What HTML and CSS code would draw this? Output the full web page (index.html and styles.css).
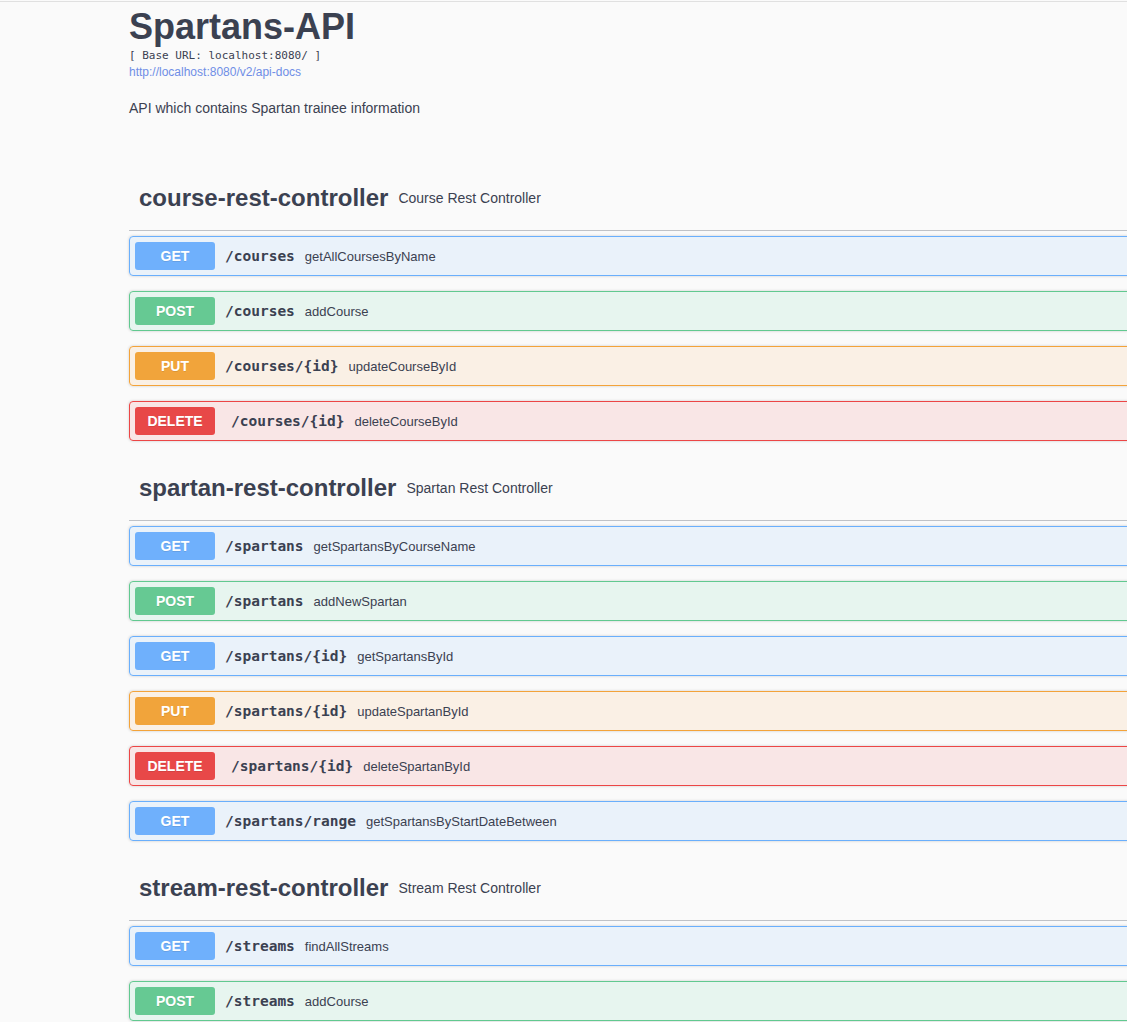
FILE: index.html
```html
<!DOCTYPE html>
<html lang="en">
<head>
<meta charset="utf-8">
<title>Spartans-API</title>
<link rel="stylesheet" href="styles.css">
</head>
<body>
<div class="page">
  <div class="wrapper">
    <section class="info">
      <h2 class="title">Spartans-API</h2>
      <pre class="base-url">[ Base URL: localhost:8080/ ]</pre>
      <a class="docs-link" href="#">http://localhost:8080/v2/api-docs</a>
      <p class="description">API which contains Spartan trainee information</p>
    </section>

    <section class="tag-section">
      <h3 class="tag"><span class="tag-name">course-rest-controller</span><small class="tag-desc">Course Rest Controller</small></h3>
      <div class="op op-get"><span class="method">GET</span><span class="path">/courses</span><span class="summary">getAllCoursesByName</span></div>
      <div class="op op-post"><span class="method">POST</span><span class="path">/courses</span><span class="summary">addCourse</span></div>
      <div class="op op-put"><span class="method">PUT</span><span class="path">/courses/{id}</span><span class="summary">updateCourseById</span></div>
      <div class="op op-delete"><span class="method">DELETE</span><span class="path">/courses/{id}</span><span class="summary">deleteCourseById</span></div>
    </section>

    <section class="tag-section">
      <h3 class="tag"><span class="tag-name">spartan-rest-controller</span><small class="tag-desc">Spartan Rest Controller</small></h3>
      <div class="op op-get"><span class="method">GET</span><span class="path">/spartans</span><span class="summary">getSpartansByCourseName</span></div>
      <div class="op op-post"><span class="method">POST</span><span class="path">/spartans</span><span class="summary">addNewSpartan</span></div>
      <div class="op op-get"><span class="method">GET</span><span class="path">/spartans/{id}</span><span class="summary">getSpartansById</span></div>
      <div class="op op-put"><span class="method">PUT</span><span class="path">/spartans/{id}</span><span class="summary">updateSpartanById</span></div>
      <div class="op op-delete"><span class="method">DELETE</span><span class="path">/spartans/{id}</span><span class="summary">deleteSpartanById</span></div>
      <div class="op op-get"><span class="method">GET</span><span class="path">/spartans/range</span><span class="summary">getSpartansByStartDateBetween</span></div>
    </section>

    <section class="tag-section">
      <h3 class="tag"><span class="tag-name">stream-rest-controller</span><small class="tag-desc">Stream Rest Controller</small></h3>
      <div class="op op-get"><span class="method">GET</span><span class="path">/streams</span><span class="summary">findAllStreams</span></div>
      <div class="op op-post"><span class="method">POST</span><span class="path">/streams</span><span class="summary">addCourse</span></div>
    </section>
  </div>
</div>
</body>
</html>
```

FILE: styles.css
```css
html, body {
  margin: 0;
  padding: 0;
  overflow: hidden;
  background: #fafafa;
}

body {
  font-family: "Liberation Sans", Arial, sans-serif;
  color: #3b4151;
  padding-top: 1px;
}

.page {
  border-top: 1px solid #e0e0e0;
}

.wrapper {
  width: 1400px;
  padding-left: 129px;
}

.info {
  padding-top: 4px;
  margin-bottom: 50px;
}

.title {
  margin: 0;
  font-size: 36px;
  line-height: 41px;
  font-weight: 700;
  color: #3b4151;
}

.base-url {
  margin: 2px 0 0;
  font-family: "DejaVu Sans Mono", "Liberation Mono", monospace;
  font-size: 11px;
  line-height: 14px;
  color: #3b4151;
}

.docs-link {
  display: block;
  margin-top: 1px;
  font-size: 12px;
  line-height: 16px;
  color: #6f8ee6;
  text-decoration: none;
}

.description {
  margin: 20px 0 0;
  font-size: 14px;
  line-height: 16px;
}

.tag {
  display: flex;
  align-items: center;
  height: 44px;
  margin: 0 0 5px;
  padding: 10px 20px 10px 10px;
  border-bottom: 1px solid rgba(59, 65, 81, 0.3);
  font-weight: 400;
}

.tag-name {
  font-size: 24px;
  font-weight: 700;
  color: #3b4151;
}

.tag-desc {
  margin-left: 10px;
  font-size: 14px;
  color: #3b4151;
}

.op {
  display: flex;
  align-items: center;
  margin: 0 0 15px;
  padding: 5px;
  border: 1px solid;
  border-radius: 4px;
  box-shadow: 0 0 3px rgba(0, 0, 0, 0.19);
}

.method {
  width: 80px;
  height: 28px;
  line-height: 28px;
  border-radius: 3px;
  text-align: center;
  font-size: 14px;
  font-weight: 700;
  color: #fff;
  text-shadow: 0 1px 0 rgba(0, 0, 0, 0.1);
}

.path {
  padding: 0 10px;
  font-family: "DejaVu Sans Mono", "Liberation Mono", monospace;
  font-size: 14.5px;
  font-weight: 700;
  color: #3b4151;
}

.summary {
  font-size: 13px;
  color: #3b4151;
}

.op-get { background: rgba(97, 175, 254, 0.1); border-color: #6aaffc; }
.op-get .method { background: #6fb0fc; }

.op-post { background: rgba(73, 204, 144, 0.1); border-color: #62c990; }
.op-post .method { background: #66c993; }

.op-put { background: rgba(252, 161, 48, 0.1); border-color: #f3a33a; }
.op-put .method { background: #f1a43b; }

.op-delete { background: rgba(249, 62, 62, 0.1); border-color: #ec4646; }
.op-delete .method { background: #e84848; }
.op-delete .path { padding-left: 16px; }
```
